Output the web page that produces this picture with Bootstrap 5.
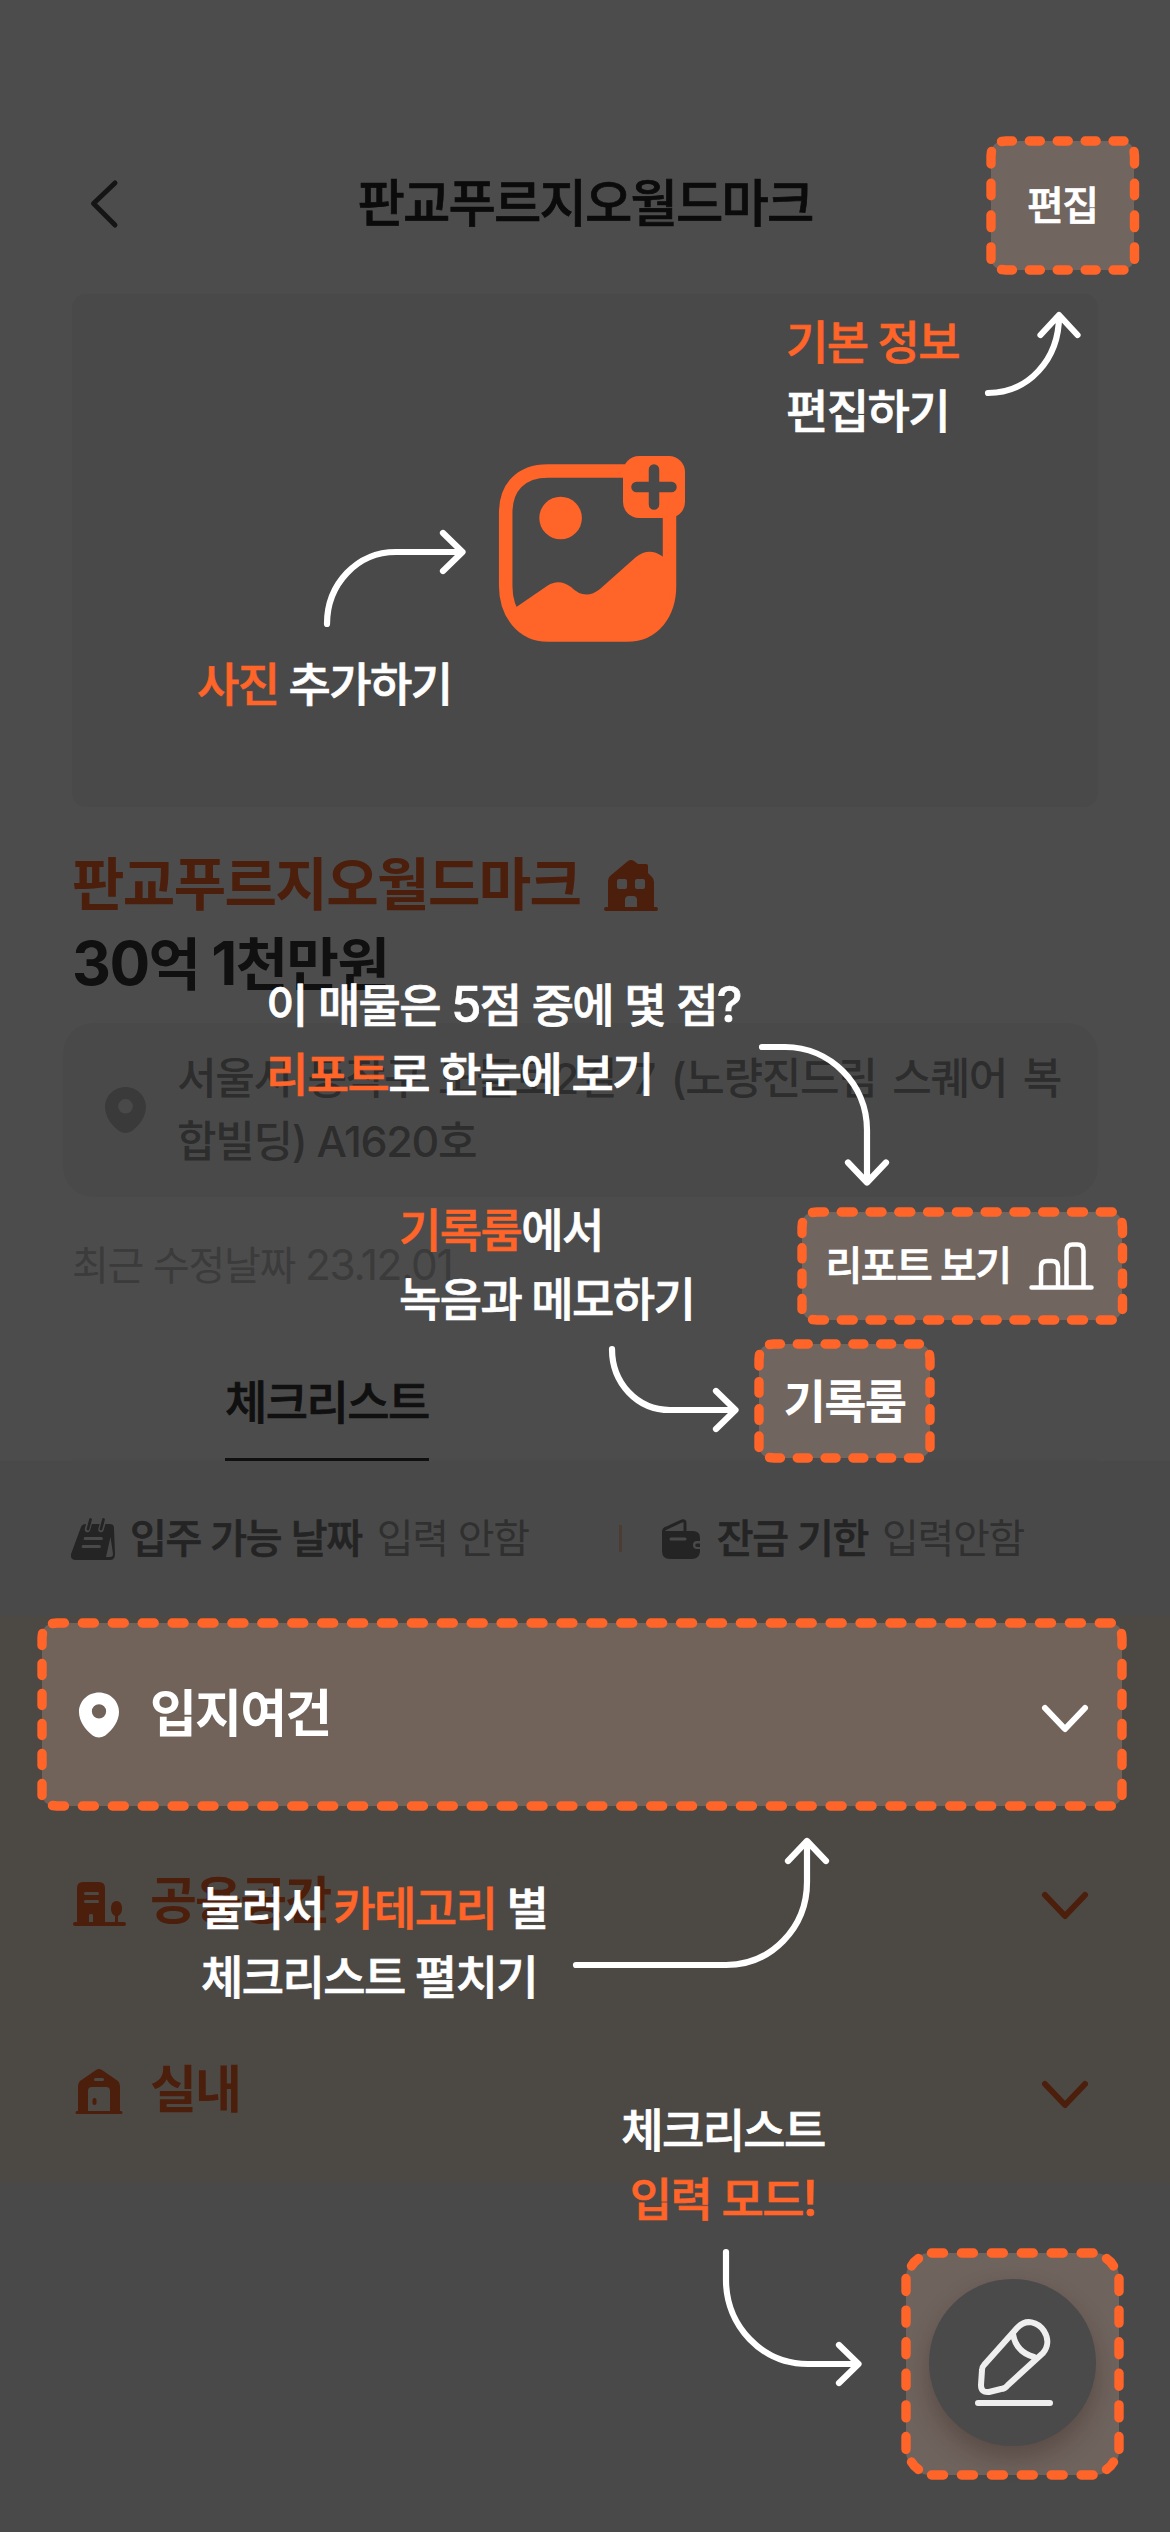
<!DOCTYPE html>
<html lang="ko">
<head>
<meta charset="utf-8">
<meta name="viewport" content="width=device-width, initial-scale=1">
<title>판교푸르지오월드마크</title>
<link href="https://cdn.jsdelivr.net/npm/bootstrap@5.3.0/dist/css/bootstrap.min.css" rel="stylesheet">
<style>
  :root { --brand: #ff6428; }
  body { font-family: Inter, "Noto Sans CJK KR", sans-serif; background: #fff; color: #363636; white-space: nowrap; }
  svg { display: block; flex: none; overflow: visible; }
  .screen { width: 1170px; height: 2532px; }
  /* weight between the medium and bold cuts */
  .semi { font-weight: 500 !important; -webkit-text-stroke: .7px currentColor; }

  /* property page */
  .topbar { height: 294px; padding: 132px 72px 20px; }
  .topbar h1 { font-size: 51.5px; line-height: 60px; letter-spacing: -1.9px; color: #272727; }
  .back-btn { left: 90px; top: 180px; }
  .photo-box { margin: 0 72px; height: 513px; border-radius: 14px; background: #f4f4f4; }
  .listing { margin: 38px 72px 0; height: 160px; font-size: 57px; line-height: 80px; font-weight: 700; letter-spacing: -1.6px; }
  .brand-text { color: var(--brand); }
  .latin { font-size: 1.06em; line-height: 1; }
  .address { margin: 18px 72px 0 63px; height: 174px; border-radius: 30px; background: #f6f6f6; padding: 0 36px 0 42px; gap: 31px; color: #969696; }
  .address p { width: 884px; font-size: 43px; line-height: 63px; font-weight: 500; letter-spacing: -1.3px; text-align: justify; white-space: normal; }
  .edited { margin: 39px 72px 0; height: 60px; font-size: 40px; line-height: 60px; font-weight: 400; letter-spacing: -1.3px; color: #c6c6c6; }
  .tabs-row { margin: 47px 72px 0; height: 118px; padding-left: 153px; box-shadow: inset 0 -3px #fafafa; }
  .tab-on { height: 118px; line-height: 118px; width: 204px; font-size: 46px; letter-spacing: -1.6px; border-bottom: 3px solid #363636; color: #363636; }
  .facts { height: 155px; padding-left: 71px; font-size: 40px; line-height: 60px; letter-spacing: -1.3px; background: #f6f6f6; color: #a0a0a0; }
  .facts b { color: #787878; }
  .rule { width: 3px; height: 27px; background: #ffcbae; }
  .cats { height: 567px; background: #fff3e8; color: var(--brand); }
  .cat-item { height: 189px; padding: 3px 82px 0 72px; font-size: 51px; line-height: 60px; font-weight: 700; letter-spacing: -1.8px; }
  .cat-icon { width: 78px; }
  .after { height: 349px; background: #f5f5f5; }

  /* coach marks */
  .shade { background: rgba(0,0,0,.7); }
  .tip { position: absolute; color: #fff; font-size: 46px; line-height: 69px; letter-spacing: -1.6px; word-spacing: -.5px; }
  .tip .latin { line-height: 1; }
  .spot { position: absolute; color: #fff; background: rgba(255,197,168,.21); border-radius: 12px; }
  .spot .dashes { position: absolute; left: 0; top: 0; fill: none; stroke: var(--brand); stroke-width: 9.4; stroke-linecap: round; }
  .arrows { position: absolute; left: 0; top: 0; fill: none; stroke: #fff; stroke-width: 6.2; stroke-linecap: round; stroke-linejoin: round; }
  .add-photo { left: 497.500px; top: 455px; }
  .t-edit { left: 786px; top: 308px; }
  .t-photo { left: 197px; top: 650px; }
  .t-report { left: 266px; top: 971px; }
  .t-room { left: 399px; top: 1196px; }
  .t-cat { left: 201px; top: 1874px; }
  .t-write { left: 600px; width: 246px; top: 2096px; text-align: center; }
  .s-edit { left: 990.5px; top: 141px; width: 143.5px; height: 129px; font-size: 40px; letter-spacing: -1.5px; }
  .s-report { left: 801.5px; top: 1212px; width: 320.5px; height: 108px; padding: 0 28px 0 24px; font-size: 40px; letter-spacing: -1.5px; word-spacing: -.5px; }
  .s-room { left: 759px; top: 1344px; width: 171px; height: 114px; font-size: 46px; font-weight: 700; letter-spacing: -1.6px; }
  .s-cat { left: 42px; top: 1623px; width: 1080px; height: 183px; padding: 0 34px 0 29px; font-size: 51px; font-weight: 700; letter-spacing: -1.8px; }
  .s-write { left: 906px; top: 2253px; width: 213px; height: 222px; border-radius: 24px; }
  .fab { width: 167px; height: 167px; margin-bottom: 3px; background: #4a4a4a; box-shadow: 0 12px 24px rgba(40,20,15,.3); }
</style>
</head>
<body>
<div class="screen position-relative overflow-hidden">

  <header class="topbar d-flex justify-content-center align-items-center">
    <svg class="back-btn position-absolute" width="28" height="48" fill="none" stroke="#464646" stroke-width="5" stroke-linecap="round" stroke-linejoin="round"><path d="M25 3 3.500 23.500 25 45"/></svg>
    <h1 class="m-0 semi">판교푸르지오월드마크</h1>
  </header>

  <div class="photo-box"></div>

  <section class="listing">
    <div class="brand-text d-flex align-items-center">판교푸르지오월드마크
      <svg class="ms-4" width="54" height="51" fill="currentColor"><path fill-rule="evenodd" d="M4 47V21q0-3 2-5L24 1q3-2 6 0l4 3h8q2 0 2 2v7l4 4q2 2 2 5v25h2a2 2 0 0 1 0 4H2a2 2 0 0 1 0-4zM15 19q-2 0-2 2v6q0 2 2 2h6q2 0 2-2v-6q0-2-2-2zm18 0q-2 0-2 2v6q0 2 2 2h6q2 0 2-2v-6q0-2-2-2zM21 47h12V40q0-4-4-4h-4q-4 0-4 4z"/></svg>
    </div>
    <div><span class="latin">30</span>억 <span class="latin">1</span>천만원</div>
  </section>

  <section class="address d-flex align-items-center">
    <svg width="41" height="46" viewBox="0 0 41 46" fill="#c1c1c1"><path fill-rule="evenodd" d="M20.500 0C9 0 0 9 0 20c0 9 6 18 14 24q6 4 13 0c8-6 14-15 14-24C41 9 32 0 20.500 0zm0 12a7.300 7.300 0 1 1 0 14.600 7.300 7.300 0 0 1 0-14.600z"/></svg>
    <p class="m-0">서울시 동작구 노들로2길 7 (노량진드림 스퀘어 복합빌딩) A1620호</p>
  </section>

  <div class="edited">최근 수정날짜 <span class="latin">23.12.01</span></div>

  <nav class="tabs-row d-flex"><div class="tab-on semi">체크리스트</div></nav>

  <section class="facts d-flex align-items-center">
    <svg width="44" height="42" fill="#787878"><path fill-rule="evenodd" d="M10 9q1-3 5-3h24q4 0 4 4l1 26q0 6-5 6H5q-6 0-5-6zM13 19.500q-1 2.500 1 2.500h16q2 0 2-1.500T30 19H14zM11 27.500q-1 2.500 1 2.500h16q2 0 2-1.500T28 27H12zM39.500 19 35 39h4q3 0 3-3z"/><path d="m18 6-1.500 5.500M31.500 6 30 11.500" stroke="#f6f6f6" stroke-width="5.500" stroke-linecap="round"/><path d="m19.500 1.500-2.500 9.500M32.500 1.500 30 11" stroke="#787878" stroke-width="2.800" stroke-linecap="round"/></svg>
    <b class="semi" style="margin-left:15px">입주 가능 날짜</b><span style="margin-left:15px">입력 안함</span>
    <span class="rule" style="margin-left:90px"></span>
    <svg style="margin-left:40px" width="38" height="40" fill="#787878"><path fill-rule="evenodd" d="M0 12h31q7 0 7 7v3h-3a4 4 0 0 0 0 8h3v3q-1 7-8 7H8q-8 0-8-8zm9 6.500a1.500 1.500 0 0 0 0 3h14a1.500 1.500 0 0 0 0-3zM38 24.500v3.500h-3a1.700 1.700 0 0 1 0-3.500z"/><path d="M1.500 18v-5q0-3 3-4L20 2q3-1 3 2v10" fill="none" stroke="#787878" stroke-width="3"/></svg>
    <b class="semi" style="margin-left:17px">잔금 기한</b><span style="margin-left:14px">입력안함</span>
  </section>

  <section class="cats">
    <div class="cat-item"></div>
    <div class="cat-item d-flex align-items-center">
      <div class="cat-icon" style="padding:5px 0 0 1px"><svg width="53" height="44" fill="currentColor"><path fill-rule="evenodd" d="M4 40V6q0-6 6-6h16q6 0 6 6v34h10v-6q-4-2-4-7 0-8 5.500-8t5.500 8q0 5-4 7v6h6a2 2 0 0 1 0 4H2a2 2 0 0 1 0-4zM12.500 10a1.500 1.500 0 0 0 0 3h12a1.500 1.500 0 0 0 0-3zm0 8a1.500 1.500 0 0 0 0 3h12a1.500 1.500 0 0 0 0-3zM16 40h4v-7q0-1-2-1t-2 1z"/></svg></div>
      <span>공용공간</span>
      <svg class="ms-auto mt-2" width="46" height="27" fill="none" stroke="currentColor" stroke-width="6" stroke-linecap="round" stroke-linejoin="round"><path d="m3 3 20 21L43 3"/></svg>
    </div>
    <div class="cat-item d-flex align-items-center">
      <div class="cat-icon" style="padding:3px 0 0 3px"><svg width="48" height="45" fill="currentColor"><path fill-rule="evenodd" d="M3 42V17q0-3 2-5L21 1q3-2 6 0l16 11q2 2 2 5v25h1a1.500 1.500 0 0 1 0 3H2a1.500 1.500 0 0 1 0-3zM13 42h22V22q0-4-4-4H17q-4 0-4 4zm7.500-33a1.500 1.500 0 0 0 0 3h7a1.500 1.500 0 0 0 0-3z"/><rect x="17.500" y="29" width="4" height="7" rx="2"/></svg></div>
      <span>실내</span>
      <svg class="ms-auto mt-2" width="46" height="27" fill="none" stroke="currentColor" stroke-width="6" stroke-linecap="round" stroke-linejoin="round"><path d="m3 3 20 21L43 3"/></svg>
    </div>
  </section>
  <div class="after"></div>

  <!-- coach mark layer -->
  <div class="shade position-absolute top-0 start-0 w-100 h-100">

    <svg class="add-photo position-absolute" width="188" height="188">
      <path fill="none" stroke="#ff6428" stroke-width="13.500" d="M127 16H50C23 16 7.700 32 7.700 58v73C7.700 158 24 180 50 180h79c27 0 42.500-22 42.500-49V60"/>
      <circle cx="62.600" cy="63" r="21.300" fill="#ff6428"/>
      <path fill="#ff6428" d="m14 155 35-24q12-8 24 1 14 14 29 2l36-32q13-10 26-1l8 6v30c0 29-19 49-43 49H49c-20 0-35-14-37-31z"/>
      <rect x="125" y="1" width="62" height="62" rx="16" fill="#ff6428"/>
      <path stroke="#494949" stroke-width="10.500" stroke-linecap="round" d="M156 14.500v35M138.500 32h35"/>
    </svg>

    <div class="tip semi t-edit"><span class="brand-text">기본 정보</span><br>편집하기</div>
    <div class="tip semi t-photo"><span class="brand-text">사진</span> 추가하기</div>
    <div class="tip semi t-report"><span style="word-spacing:.5px">이 매물은 <span class="latin">5</span>점 중에 몇 점<span class="latin">?</span></span><br><span class="brand-text">리포트</span>로 한눈에 보기</div>
    <div class="tip semi t-room"><span class="brand-text">기록룸</span>에서<br>녹음과 메모하기</div>
    <div class="tip semi t-cat">눌러서 <span class="brand-text">카테고리</span> 별<br>체크리스트 펼치기</div>
    <div class="tip semi t-write">체크리스트<br><span class="brand-text">입력 모드<span class="latin">!</span></span></div>

    <div class="spot semi s-edit d-flex align-items-center justify-content-center">
      <svg class="dashes" width="144" height="129"><path stroke-dasharray="11 16.900" d="M10.500.5 15 0H133M10.500 128.500 15 129H133"/><path stroke-dasharray="12.500 19.300" d="M.5 10.500 0 15V118.500M143 10.500l.5 4.500V118.500"/></svg>
      편집
    </div>

    <div class="spot semi s-report d-flex align-items-center justify-content-between">
      <svg class="dashes" width="321" height="108"><path stroke-dasharray="12 16.780" d="M10.500.5 15 0H310.500M10.500 107.500 15 108H310.500"/><path stroke-dasharray="11 14.330" d="M.5 10.500 0 15V97.500M320 10.500l.5 4.500V97.500"/></svg>
      리포트 보기
      <svg width="65" height="48" fill="none" stroke="#fff" stroke-width="4.500" stroke-linecap="round"><path d="M2.500 45.500h60M12 45V25q0-6 6-6h5q6 0 6 6v20M37.500 45V9q0-6.500 6-6.500h5q6 0 6 6.500v36"/></svg>
    </div>

    <div class="spot s-room d-flex align-items-center justify-content-center">
      <svg class="dashes" width="171" height="114"><path stroke-dasharray="11 16.800" d="M10.500.5 15 0H160.500M10.500 113.500 15 114H160.500"/><path stroke-dasharray="11.500 15.670" d="M.5 10.500 0 15V103.500M170.500 10.500l.5 4.500V103.500"/></svg>
      기록룸
    </div>

    <div class="spot s-cat d-flex align-items-center">
      <svg class="dashes" width="1080" height="183"><path stroke-dasharray="12 17.910" d="M10.500.5 15 0H1069.500M10.500 182.500 15 183H1069.500"/><path stroke-dasharray="12 18" d="M.5 10.500 0 15V172.500M1079.500 10.500l.5 4.500V172.500"/></svg>
      <div class="cat-icon ps-2" style="width:79px"><svg width="40" height="46" viewBox="0 0 41 46" fill="#fff"><path fill-rule="evenodd" d="M20.500 0C9 0 0 9 0 20c0 9 6 18 14 24q6 4 13 0c8-6 14-15 14-24C41 9 32 0 20.500 0zm0 12a7.300 7.300 0 1 1 0 14.600 7.300 7.300 0 0 1 0-14.600z"/></svg></div>
      <span>입지여건</span>
      <svg class="ms-auto mt-2" width="46" height="27" fill="none" stroke="#fff" stroke-width="6" stroke-linecap="round" stroke-linejoin="round"><path d="m3 3 20 21L43 3"/></svg>
    </div>

    <div class="spot s-write d-flex align-items-center justify-content-center">
      <svg class="dashes" width="213" height="222"><path stroke-dasharray="12 17.920" d="M25.500 0H187.500M25.500 222H187.500"/><path stroke-dasharray="13 18.600" d="M0 25.500V196.500M213 25.500V196.500"/><path d="M5.500 13q2.500-4.500 7-7.500M207.500 13q-2.500-4.500-7-7.500M5.500 209q2.500 4.500 7 7.500M207.500 209q-2.500 4.500-7 7.500"/></svg>
      <div class="fab rounded-circle d-flex align-items-center justify-content-center">
        <svg width="80" height="88" fill="none" stroke="#efefef" stroke-width="6" stroke-linecap="round" stroke-linejoin="round"><path d="M5 84h72M11 46 44 9c9-10 21-6 27 3 5 8 4 16-1 22L35 66q-3 4-7 4l-12 3q-8 1-8-7l1-15q0-3 2-5zM40 15q3 18 21 23"/></svg>
      </div>
    </div>

    <svg class="arrows" width="1170" height="2532">
      <path d="M988 393c40 0 71-33 71-77M1040.500 335 1059 315l18.500 20"/>
      <path d="M327 624c0-40 30-72 69-72h66M443 533l19.500 19L443 571"/>
      <path d="M762 1047h23c45 0 82 37 82 83v52M848 1162.500l19 20 19-20"/>
      <path d="M612 1349c0 34 25 61 58 61h65M716 1391l19.500 19-19.500 19"/>
      <path d="M576 1965h150c45 0 81-37 81-83v-40M788 1861l19-20 19 20"/>
      <path d="M726 2252v28c0 46 36 84 82 84h50M839 2345l19.500 19-19.500 19"/>
    </svg>
  </div>
</div>
<script src="https://cdn.jsdelivr.net/npm/bootstrap@5.3.0/dist/js/bootstrap.bundle.min.js"></script>
</body>
</html>
